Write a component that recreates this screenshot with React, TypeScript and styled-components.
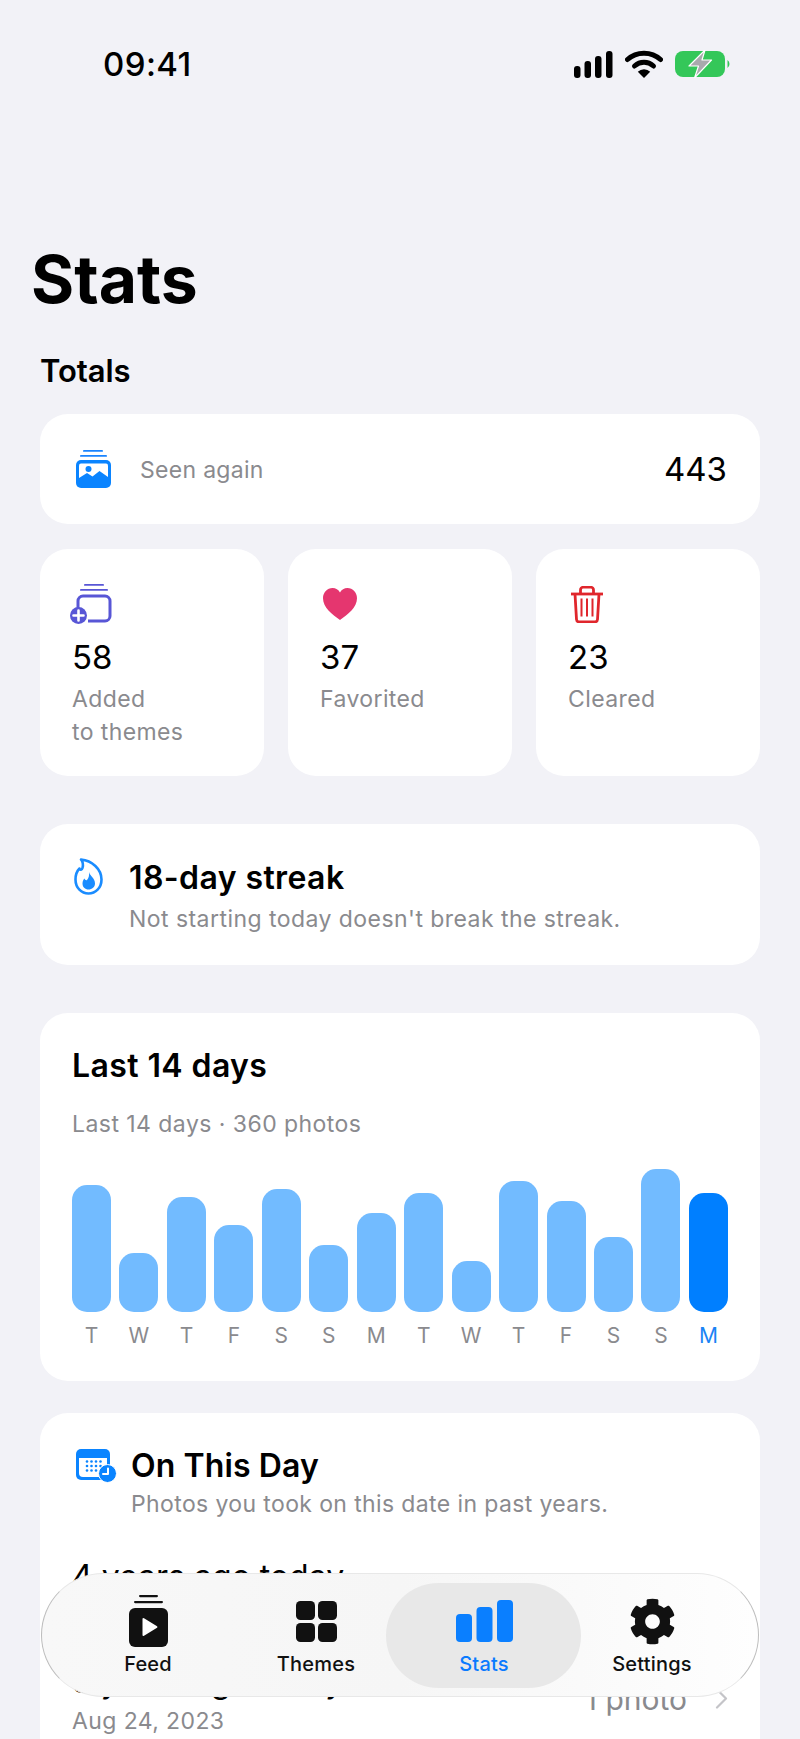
import styled, { createGlobalStyle } from 'styled-components';
import { FaCog } from 'react-icons/fa';

const GlobalStyle = createGlobalStyle`
    html, body{
        margin: 0;
        padding: 0;
        background: #f2f2f7;
    }
    body{
        font-family: Inter, "Liberation Sans", sans-serif;
        color: #000;
    }
    *{
        box-sizing: border-box;
    }
`;

const Screen = styled.div`
    position: relative;
    width: 800px;
    height: 1739px;
    overflow: hidden;
    background: #f2f2f7;
`;

const StatusBar = styled.div`
    height: 239px;
    padding: 50px 69px 0 103px;
    display: flex;
    justify-content: space-between;
    align-items: flex-start;
`;

const Time = styled.span`
    font-size: 33px;
    line-height: 28px;
    font-weight: 500;
    letter-spacing: 0.4px;
`;

const StatusIcons = styled.div`
    display: flex;
    align-items: center;
    gap: 12px;
`;

const Title = styled.h1`
    margin: 0;
    padding-left: 31px;
    font-size: 66px;
    line-height: 80px;
    font-weight: 700;
`;

const Content = styled.main`
    padding: 34px 40px 0;
`;

const SectionTitle = styled.h2`
    margin: 0 0 25px;
    font-size: 31px;
    line-height: 36px;
    font-weight: 600;
    letter-spacing: -0.1px;
`;

const Card = styled.section<{ $mt?: number }>`
    background: #fff;
    border-radius: 28px;
    margin-top: ${props => props.$mt ?? 0}px;
`;

const SeenCard = styled(Card)`
    height: 110px;
    padding: 0 33px 0 36px;
    display: flex;
    align-items: center;
`;

const SeenLabel = styled.span`
    margin: 2px 0 0 29px;
    flex: 1;
    font-size: 23px;
    letter-spacing: 0.3px;
    color: #8a8a8e;
`;

const SeenValue = styled.span`
    font-size: 33px;
`;

const TileRow = styled.div`
    margin-top: 25px;
    display: grid;
    grid-template-columns: repeat(3, 224px);
    gap: 24px;
`;

const Tile = styled(Card)`
    height: 227px;
    padding: 35px 20px 0 32px;
`;

const TileIcon = styled.div<{ $x?: number }>`
    height: 40px;
    margin-left: ${props => props.$x ?? 0}px;
    display: flex;
    align-items: center;
`;

const TileValue = styled.div`
    margin-top: 13px;
    font-size: 33px;
    line-height: 40px;
`;

const TileLabel = styled.div`
    margin-top: 6px;
    font-size: 23px;
    line-height: 33px;
    letter-spacing: 0.4px;
    color: #8a8a8e;
`;

const StreakCard = styled(Card)`
    height: 141px;
    padding: 34px 0 0 34px;
    display: flex;
    gap: 26px;
`;

const HeadingText = styled.div`
    display: flex;
    flex-direction: column;
`;

const Heading = styled.h3`
    margin: 0;
    font-size: 32px;
    line-height: 40px;
    font-weight: 600;
    letter-spacing: 0.4px;
`;

const MemoriesHeading = styled(Heading)`
    letter-spacing: 0.1px;
`;

const Sub = styled.p`
    margin: 2px 0 0;
    font-size: 23px;
    line-height: 32px;
    letter-spacing: 0.45px;
    color: #8a8a8e;
`;

const StreakSub = styled(Sub)`
    margin-top: 5px;
`;

const MemoriesSub = styled(Sub)`
    letter-spacing: 0.38px;
`;

const ChartCard = styled(Card)`
    height: 368px;
    padding: 33px 32px 0;
`;

const ChartSub = styled(Sub)`
    margin-top: 22px;
`;

const Chart = styled.div`
    margin-top: 25px;
    display: grid;
    grid-template-columns: repeat(14, 39px);
    column-gap: 8.46px;
`;

const Day = styled.div`
    display: flex;
    flex-direction: column;
    align-items: center;
    justify-content: flex-end;
    height: 186px;
`;

const Bar = styled.div<{ $today?: boolean }>`
    width: 100%;
    border-radius: 15px;
    background: ${props => props.$today ? '#007fff' : '#72bbff'};
`;

const DayLabel = styled.span<{ $today?: boolean }>`
    margin-top: 9px;
    height: 30px;
    font-size: 21px;
    line-height: 30px;
    color: ${props => props.$today ? '#1a84f5' : '#8a8a8e'};
`;

const MemoriesCard = styled(Card)`
    height: 400px;
    padding: 33px 32px 0 36px;
`;

const MemoriesHead = styled.div`
    display: flex;
    gap: 14px;
`;

const MemoriesIcon = styled.div`
    padding-top: 3px;
`;

const MemoryList = styled.div`
    margin-top: 21px;
    margin-left: -4px;
    display: flex;
    flex-direction: column;
`;

const MemoryRow = styled.div`
    height: 105px;
    display: flex;
    align-items: center;
    justify-content: space-between;
`;

const MemoryName = styled.div`
    font-size: 32px;
    line-height: 40px;
`;

const MemoryDate = styled.div`
    margin-top: 4px;
    font-size: 23px;
    line-height: 30px;
    letter-spacing: 0.4px;
    color: #8a8a8e;
`;

const MemoryCount = styled.div`
    display: flex;
    align-items: center;
    gap: 28px;
    font-size: 30px;
    color: #8a8a8e;
`;

const TabBar = styled.nav`
    position: absolute;
    left: 41px;
    top: 1573px;
    width: 718px;
    height: 124px;
    padding: 0 24px 0 22px;
    display: grid;
    grid-template-columns: repeat(4, 168px);
    border-radius: 62px;
    border: 1px solid;
    border-color: #e8e8e8 #bdbdbd;
    background: linear-gradient(90deg, #f8f8f8, #f6f6f6 50%, #fefefe);
`;

const Tab = styled.div<{ $active?: boolean }>`
    position: relative;
    display: flex;
    flex-direction: column;
    align-items: center;
    justify-content: flex-end;
    padding-bottom: 20px;
    font-size: 20px;
    line-height: 24px;
    font-weight: 500;
    letter-spacing: 0.2px;
    color: ${props => props.$active ? '#0a7aff' : '#111'};
    ${props => props.$active ? `
    &::before{
        content: '';
        position: absolute;
        left: -14px;
        right: -13px;
        top: 9px;
        bottom: 8px;
        border-radius: 54px;
        background: #e8e8e8;
    }
    ` : ''}
`;

const TabIcon = styled.div`
    position: relative;
    height: 52px;
    margin-bottom: 5px;
    display: flex;
    align-items: center;
    justify-content: center;
`;

const TabLabel = styled.span`
    position: relative;
`;

const Gear = styled(FaCog)`
    width: 47px;
    height: 47px;
    color: #111;
`;

const days = [
    { d: 'T', h: 127 }, { d: 'W', h: 59 }, { d: 'T', h: 115 }, { d: 'F', h: 87 },
    { d: 'S', h: 123 }, { d: 'S', h: 67 }, { d: 'M', h: 99 }, { d: 'T', h: 119 },
    { d: 'W', h: 51 }, { d: 'T', h: 131 }, { d: 'F', h: 111 }, { d: 'S', h: 75 },
    { d: 'S', h: 143 }, { d: 'M', h: 119 },
];

function SignalIcon(){
    return (
        <svg width="39" height="27" viewBox="0 0 39 27">
            <rect x="0" y="15" width="6.5" height="12" rx="3" fill="#000" />
            <rect x="10.5" y="10" width="6.5" height="17" rx="3" fill="#000" />
            <rect x="21" y="5" width="6.5" height="22" rx="3" fill="#000" />
            <rect x="32" y="0" width="6.5" height="27" rx="3" fill="#000" />
        </svg>
    );
}

function WifiIcon(){
    return (
        <svg width="38" height="28" viewBox="0 0 38 28" fill="none" stroke="#000" strokeWidth="5" strokeLinecap="round">
            <path d="M2.5 9.5C11.5 1 26.5 1 35.5 9.5" />
            <path d="M9.5 16C15 11 23 11 28.5 16" />
            <path d="M19 28l-6.2-6.2a8.8 8.8 0 0 1 12.4 0z" fill="#000" stroke="none" />
        </svg>
    );
}

function BatteryIcon(){
    return (
        <svg width="56" height="28" viewBox="0 0 56 28">
            <rect x="0" y="1" width="50" height="26" rx="8" fill="#34c759" />
            <path d="M52.5 10a5 5 0 0 1 0 8z" fill="#34c759" />
            <path d="M30 0L14 16h9.5l-4 12 17-18h-9.5z" fill="#a9a9ad" stroke="#fff" strokeWidth="1.2" strokeLinejoin="round" />
        </svg>
    );
}

function StackedPhotoIcon(){
    return (
        <svg width="35" height="38" viewBox="0 0 35 38">
            <rect x="7" y="0" width="20" height="1.8" rx="0.9" fill="#1a84ff" />
            <rect x="4" y="5" width="27" height="1.8" rx="0.9" fill="#1a84ff" />
            <rect x="0" y="10" width="35" height="28" rx="5" fill="#0a84ff" />
            <rect x="3" y="13.500" width="29" height="18" rx="2" fill="#fff" />
            <circle cx="12.5" cy="19" r="3" fill="#0a84ff" />
            <path d="M3 33v-5l8-5 5.500 3.500 7-5.500 8.500 6v6z" fill="#0a84ff" />
        </svg>
    );
}

function AddToThemeIcon(){
    return (
        <svg width="42" height="40" viewBox="0 0 42 40" fill="none">
            <rect x="14" y="0" width="20" height="1.8" rx="0.9" fill="#5856d6" />
            <rect x="10" y="5" width="28" height="1.8" rx="0.9" fill="#5856d6" />
            <path d="M8 24v-7a5 5 0 0 1 5-5h22a5 5 0 0 1 5 5v15a5 5 0 0 1-5 5H18" stroke="#5856d6" strokeWidth="3" />
            <circle cx="8.5" cy="31.5" r="8.5" fill="#5856d6" />
            <path d="M8.5 26.5v10M3.5 31.5h10" stroke="#fff" strokeWidth="2.6" strokeLinecap="round" />
        </svg>
    );
}

function HeartIcon(){
    return (
        <svg width="34" height="32" viewBox="0 0 34 32">
            <path d="M17 32C9 26 0 19.5 0 10.2 0 4.4 4.2 0 9.6 0 12.8 0 15.5 1.6 17 4.4 18.5 1.6 21.2 0 24.4 0 29.8 0 34 4.4 34 10.2 34 19.5 25 26 17 32z" fill="#e5366f" />
        </svg>
    );
}

function TrashIcon(){
    return (
        <svg width="32" height="37" viewBox="0 0 32 37" fill="none" stroke="#e0262c">
            <path d="M0 8h32" strokeWidth="2.8" />
            <path d="M9.5 7V4a2.8 2.8 0 0 1 2.8-2.8h7.4A2.8 2.8 0 0 1 22.500 4v3" strokeWidth="2.8" />
            <path d="M4 8l1.500 25.500a2.500 2.500 0 0 0 2.500 2.300h16a2.500 2.500 0 0 0 2.500-2.300L28 8" strokeWidth="2.8" />
            <path d="M10.500 12.500v18M16 12.500v18M21.500 12.500v18" strokeWidth="2" />
        </svg>
    );
}

function FlameIcon(){
    return (
        <svg width="29" height="37" viewBox="0 0 29 37" fill="none">
            <path d="M7 1.500C9 4 9.500 6.500 8.500 10 8 12 6 12.500 5.500 10.500 3 13 1.500 16.500 1.500 21.500 1.500 30 7.500 35.500 14.500 35.500S27.500 30 27.500 21.500C27.500 11 18 2.500 7 1.500z" stroke="#1a8cff" strokeWidth="2.6" strokeLinejoin="round" />
            <path d="M15 14C16 18 21 20 21 25.500 21 29 18 31.500 14.500 31.500S8.500 29 8.500 25.500C8.500 23 9.500 21.500 10.500 20.500 11 22 12 22.500 13 22 14.500 20.500 15.500 17.500 15 14z" fill="#1a8cff" />
        </svg>
    );
}

function CalendarIcon(){
    return (
        <svg width="41" height="34" viewBox="0 0 41 34">
            <rect x="0" y="0" width="34" height="31" rx="5" fill="#0a84ff" />
            <path d="M3 9h28v15a4 4 0 0 1-4 4H7a4 4 0 0 1-4-4z" fill="#fff" />
            {[0, 1, 2, 3].map(col => [0, 1, 2].map(row => (
                <circle key={`${col}-${row}`} cx={11 + col * 4.500} cy={12.500 + row * 4.500} r="1.300" fill="#0a84ff" />
            )))}
            <circle cx="31.500" cy="24.500" r="9" fill="#0a84ff" stroke="#fff" strokeWidth="1" />
            <path d="M32 19.500v5.500h-5" stroke="#fff" strokeWidth="2" fill="none" strokeLinecap="round" strokeLinejoin="round" />
        </svg>
    );
}

function ChevronIcon(){
    return (
        <svg width="13" height="21" viewBox="0 0 13 21" fill="none">
            <path d="M2 1.500l9 9-9 9" stroke="#c4c4c8" strokeWidth="2.200" strokeLinecap="round" strokeLinejoin="round" />
        </svg>
    );
}

function FeedIcon(){
    return (
        <svg width="39" height="52" viewBox="0 0 39 52">
            <rect x="10" y="0" width="19" height="2.200" rx="1.100" fill="#111" />
            <rect x="5" y="6" width="29" height="2.200" rx="1.100" fill="#111" />
            <rect x="0" y="13" width="39" height="39" rx="6" fill="#111" />
            <path d="M13.500 24a1 1 0 0 1 1.500-.800l13 8a1 1 0 0 1 0 1.600l-13 8a1 1 0 0 1-1.500-.800z" fill="#fff" />
        </svg>
    );
}

function ThemesIcon(){
    return (
        <svg width="41" height="41" viewBox="0 0 41 41" fill="#111">
            <rect x="0" y="0" width="19" height="19" rx="4.500" />
            <rect x="22" y="0" width="19" height="19" rx="4.500" />
            <rect x="0" y="22" width="19" height="19" rx="4.500" />
            <rect x="22" y="22" width="19" height="19" rx="4.500" />
        </svg>
    );
}

function StatsIcon(){
    return (
        <svg width="57" height="42" viewBox="0 0 57 42" fill="#0a7fff">
            <rect x="0" y="14" width="16" height="28" rx="4" />
            <rect x="20.500" y="7" width="16" height="35" rx="4" />
            <rect x="41" y="0" width="16" height="42" rx="4" />
        </svg>
    );
}

function App(){
    return (
        <Screen>
            <GlobalStyle />
            <StatusBar>
                <Time>09:41</Time>
                <StatusIcons>
                    <SignalIcon />
                    <WifiIcon />
                    <BatteryIcon />
                </StatusIcons>
            </StatusBar>
            <Title>Stats</Title>
            <Content>
                <SectionTitle>Totals</SectionTitle>
                <SeenCard>
                    <StackedPhotoIcon />
                    <SeenLabel>Seen again</SeenLabel>
                    <SeenValue>443</SeenValue>
                </SeenCard>
                <TileRow>
                    <Tile>
                        <TileIcon $x={-2}><AddToThemeIcon /></TileIcon>
                        <TileValue>58</TileValue>
                        <TileLabel>Added<br />to themes</TileLabel>
                    </Tile>
                    <Tile>
                        <TileIcon $x={3}><HeartIcon /></TileIcon>
                        <TileValue>37</TileValue>
                        <TileLabel>Favorited</TileLabel>
                    </Tile>
                    <Tile>
                        <TileIcon $x={3}><TrashIcon /></TileIcon>
                        <TileValue>23</TileValue>
                        <TileLabel>Cleared</TileLabel>
                    </Tile>
                </TileRow>
                <StreakCard $mt={48}>
                    <FlameIcon />
                    <HeadingText>
                        <Heading>18-day streak</Heading>
                        <StreakSub>Not starting today doesn't break the streak.</StreakSub>
                    </HeadingText>
                </StreakCard>
                <ChartCard $mt={48}>
                    <Heading>Last 14 days</Heading>
                    <ChartSub>Last 14 days · 360 photos</ChartSub>
                    <Chart>
                        {days.map((day, i) => {
                            const today = i === days.length - 1;
                            return (
                                <Day key={i}>
                                    <Bar $today={today} style={{ height: day.h }} />
                                    <DayLabel $today={today}>{day.d}</DayLabel>
                                </Day>
                            );
                        })}
                    </Chart>
                </ChartCard>
                <MemoriesCard $mt={32}>
                    <MemoriesHead>
                        <MemoriesIcon><CalendarIcon /></MemoriesIcon>
                        <HeadingText>
                            <MemoriesHeading>On This Day</MemoriesHeading>
                            <MemoriesSub>Photos you took on this date in past years.</MemoriesSub>
                        </HeadingText>
                    </MemoriesHead>
                    <MemoryList>
                        <MemoryRow>
                            <div>
                                <MemoryName>4 years ago today</MemoryName>
                                <MemoryDate>Aug 24, 2022</MemoryDate>
                            </div>
                        </MemoryRow>
                        <MemoryRow>
                            <div>
                                <MemoryName>3 years ago today</MemoryName>
                                <MemoryDate>Aug 24, 2023</MemoryDate>
                            </div>
                            <MemoryCount>1 photo<ChevronIcon /></MemoryCount>
                        </MemoryRow>
                    </MemoryList>
                </MemoriesCard>
            </Content>
            <TabBar>
                <Tab>
                    <TabIcon><FeedIcon /></TabIcon>
                    <TabLabel>Feed</TabLabel>
                </Tab>
                <Tab>
                    <TabIcon><ThemesIcon /></TabIcon>
                    <TabLabel>Themes</TabLabel>
                </Tab>
                <Tab $active>
                    <TabIcon><StatsIcon /></TabIcon>
                    <TabLabel>Stats</TabLabel>
                </Tab>
                <Tab>
                    <TabIcon><Gear /></TabIcon>
                    <TabLabel>Settings</TabLabel>
                </Tab>
            </TabBar>
        </Screen>
    );
}

export default App;
